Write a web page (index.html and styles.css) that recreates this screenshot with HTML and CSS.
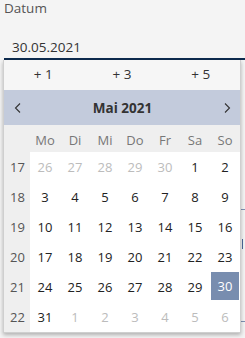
FILE: index.html
```html
<!DOCTYPE html>
<html lang="de">
<head>
  <meta charset="UTF-8">
  <title>Datum</title>
  <meta name="viewport" content="width=device-width,initial-scale=1">
  <link rel="stylesheet" href="styles.css">
</head>
<body>
  <div class="field">
    <label class="label">Datum</label>
    <div class="input">30.05.2021</div>
  </div>
  <div class="field under"><div class="input"></div></div>
  <div class="field under2"><div class="input"><span class="caret"></span></div></div>
  <div class="field under3"><div class="input"></div></div>

  <div class="picker">
    <div class="quick">
      <button>+ 1</button>
      <button>+ 3</button>
      <button>+ 5</button>
    </div>
    <div class="head">
      <svg class="nav" width="10" height="12" viewBox="0 0 10 12"><polyline points="7,1.5 2.5,6 7,10.5" fill="none" stroke="#333" stroke-width="1.1"/></svg>
      <span class="month">Mai 2021</span>
      <svg class="nav" width="10" height="12" viewBox="0 0 10 12"><polyline points="3,1.5 7.5,6 3,10.5" fill="none" stroke="#333" stroke-width="1.1"/></svg>
    </div>
    <div class="grid">
      <div class="wk"></div>
      <div class="dn">Mo</div><div class="dn">Di</div><div class="dn">Mi</div><div class="dn">Do</div><div class="dn">Fr</div><div class="dn">Sa</div><div class="dn">So</div>

      <div class="wk">17</div>
      <div class="d o">26</div><div class="d o">27</div><div class="d o">28</div><div class="d o">29</div><div class="d o">30</div><div class="d">1</div><div class="d">2</div>

      <div class="wk">18</div>
      <div class="d">3</div><div class="d">4</div><div class="d">5</div><div class="d">6</div><div class="d">7</div><div class="d">8</div><div class="d">9</div>

      <div class="wk">19</div>
      <div class="d">10</div><div class="d">11</div><div class="d">12</div><div class="d">13</div><div class="d">14</div><div class="d">15</div><div class="d">16</div>

      <div class="wk">20</div>
      <div class="d">17</div><div class="d">18</div><div class="d">19</div><div class="d">20</div><div class="d">21</div><div class="d">22</div><div class="d">23</div>

      <div class="wk">21</div>
      <div class="d">24</div><div class="d">25</div><div class="d">26</div><div class="d">27</div><div class="d">28</div><div class="d">29</div><div class="d sel"><span>30</span></div>

      <div class="wk">22</div>
      <div class="d">31</div><div class="d o">1</div><div class="d o">2</div><div class="d o">3</div><div class="d o">4</div><div class="d o">5</div><div class="d o">6</div>
    </div>
  </div>
</body>
</html>
```

FILE: styles.css
```css
body {
  margin:0; background:#f4f4f4;
  font-family:"Open Sans", sans-serif; font-size:13px; color:#222;
  position:relative; height:338px; overflow:hidden;
}
.field {padding:0 0 0 4px;}
.label {display:block; color:#555; font-size:13.5px; line-height:17px; height:17px;}
.input {
  height:43px; box-sizing:border-box; border-bottom:2px solid #0d2b4e;
  padding:21px 0 0 8px; line-height:18px; color:#333; font-size:13.5px;
}
.under .input {height:150px; border-bottom:1px solid #7f91b3;}
.under2 .input {height:0; border:0; padding:0; position:relative;}
.caret {position:absolute; right:2px; top:29px; width:1px; height:10px; background:#4d6a9a;}
.under3 .input {height:112px; border-bottom:1px solid #7f91b3;}

.picker {
  position:absolute; left:3px; top:60px; width:236px;
  border:1px solid #cfcfcf; border-top:0;
  background:#fff; box-shadow:0 2px 4px rgba(0,0,0,.28);
}
.quick {display:grid; grid-template-columns:repeat(3,1fr); height:30px; background:#f6f6f6;}
.quick button {
  border:0; background:none; font:inherit; font-size:13.5px; color:#333;
  padding:0 0 2px; margin:0;
}
.head {
  display:flex; align-items:center; justify-content:space-between;
  height:35px; background:#c3cbdc; padding:0 8px 0 9px;
}
.month {font-weight:bold; font-size:13.5px; color:#333;}
.grid {
  display:grid; grid-template-columns:26px repeat(7,30px);
  grid-template-rows:27px repeat(6,30px);
}
.wk {background:#efefef; color:#555; display:flex; align-items:center; justify-content:center; padding-left:1px;}
.dn {background:#efefef; color:#777; display:flex; align-items:center; justify-content:center; padding-top:2px;}
.d {display:flex; align-items:center; justify-content:center; color:#222;}
.d.o {color:#bcbcbc;}
.d.sel span {
  width:28px; height:28px; margin-bottom:2px; background:#788daf; color:#fff;
  display:flex; align-items:center; justify-content:center;
}
```
